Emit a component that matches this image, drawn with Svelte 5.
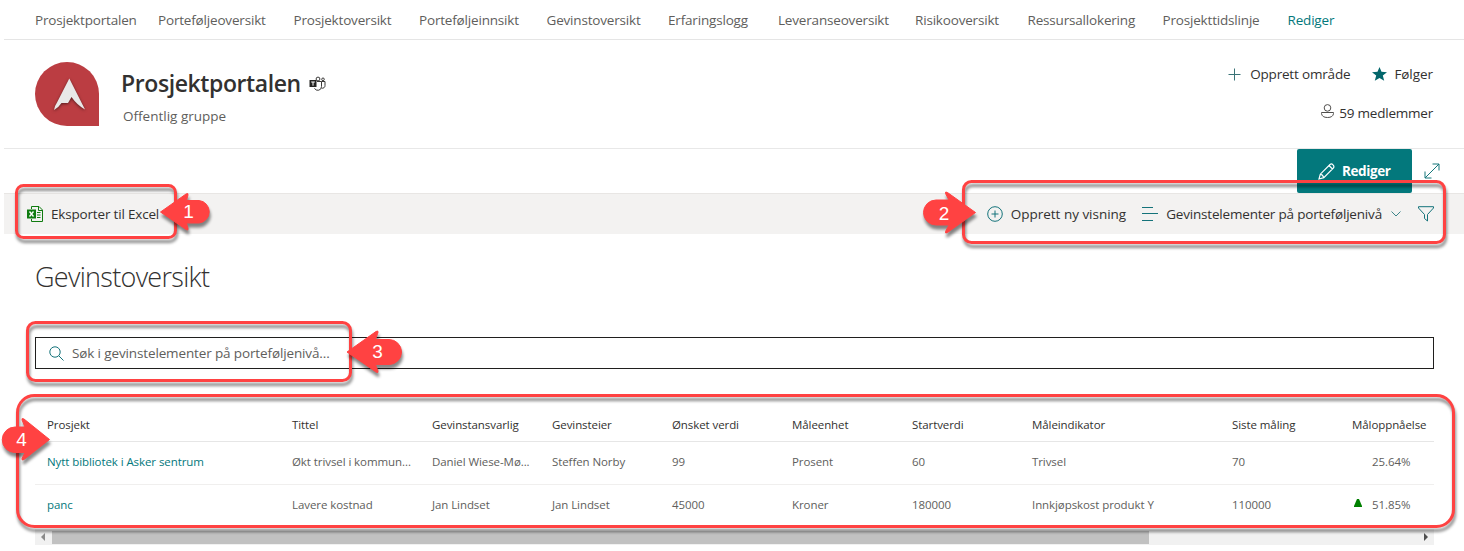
<script>
  const nav = [
    ['Prosjektportalen', 123], ['Porteføljeoversikt', 135.5], ['Prosjektoversikt', 125.5],
    ['Porteføljeinnsikt', 127.5], ['Gevinstoversikt', 121.5], ['Erfaringslogg', 110],
    ['Leveranseoversikt', 137], ['Risikooversikt', 112.5], ['Ressursallokering', 135],
    ['Prosjekttidslinje', 125], ['Rediger', 60]
  ];
  const columns = ['Prosjekt', 'Tittel', 'Gevinstansvarlig', 'Gevinsteier', 'Ønsket verdi', 'Måleenhet', 'Startverdi', 'Måleindikator', 'Siste måling', 'Måloppnåelse'];
  const rows = [
    ['Nytt bibliotek i Asker sentrum', 'Økt trivsel i kommun...', 'Daniel Wiese-Mø...', 'Steffen Norby', '99', 'Prosent', '60', 'Trivsel', '70', '25.64%'],
    ['panc', 'Lavere kostnad', 'Jan Lindset', 'Jan Lindset', '45000', 'Kroner', '180000', 'Innkjøpskost produkt Y', '110000', '51.85%']
  ];
  const boxes = [
    { x: 16.5, y: 185.5, w: 159, h: 52, r: 7 },
    { x: 963.5, y: 181.5, w: 481, h: 61, r: 8 },
    { x: 27.5, y: 322.5, w: 323, h: 58, r: 8 },
    { x: 17.5, y: 395.5, w: 1436, h: 131, r: 17 }
  ];
  const arrows = [
    { d: 'M160.500 212L186 194Q188.500 192.500 188 195L186.500 200.500H199A11.300 11.300 0 0 1 199 223H186.500L188 228.500Q188.500 231 186 229.500Z', n: 1, x: 188.5, y: 218 },
    { d: 'M975.500 212.500L947.500 192.500Q945 191 945.500 193.500L949 200H936A12.500 12.500 0 0 0 936 225H949L945.500 231.500Q945 234 947.500 232.500Z', n: 2, x: 944, y: 219.5 },
    { d: 'M347 352L376 331.500Q378.500 330 378 332.500L375.500 339.500H389A12.500 12.500 0 0 1 389 364.500H375.500L378 371Q378.500 373.500 376 372Z', n: 3, x: 377.500, y: 358 },
    { d: 'M49.500 439.500L24 419Q21.500 417.500 22 420L25 427H15A12.700 12.700 0 0 0 15 452.500H25L22 458.500Q21.500 461 24 459.500Z', n: 4, x: 21.500, y: 446 }
  ];
</script>

<div class="page">
  <nav>
    {#each nav as [label, width], i}
      <a class:edit={i === 10} style="width:{width}px">{label}</a>
    {/each}
  </nav>

  <header>
    <svg class="logo" width="64" height="64" viewBox="0 0 64 64">
      <path d="M32 0A32 32 0 0 1 64 32V64H32A32 32 0 0 1 32 0Z" fill="#bb3d42" />
      <path class="mark" d="M34.300 16.500L50 47.500Q42 43 36.500 35L33 41H26.500Q24 45 19 48Q19.500 44 22 40.500Z" fill="#e8e8e8" />
    </svg>
    <div class="site">
      <div class="name">
        <h1>Prosjektportalen</h1>
        <svg width="17" height="16" viewBox="0 0 17 16" fill="none" stroke="#3b3a39">
          <circle cx="9" cy="3" r="1.900" /><circle cx="14" cy="3.300" r="1.300" />
          <path d="M8 5.500H12.500V10.500A3.700 3.700 0 0 1 5.500 12.300M12.500 5.500H16V9.500A2.500 2.500 0 0 1 12.500 12" />
          <path d="M.5 4H7.500V11H.5Z" fill="#252423" stroke="none" />
          <path d="M2.200 6H5.800M4 6V9.700" stroke="#fff" />
        </svg>
      </div>
      <p>Offentlig gruppe</p>
    </div>
    <div class="actions">
      <div class="top">
        <svg class="plus" width="13" height="13" viewBox="0 0 13 13"><path d="M6.500 .5V12.500M.5 6.500H12.500" stroke="#3a7377" /></svg>
        <span class="create">Opprett område</span>
        <svg class="star" width="15" height="14" viewBox="0 0 15 14"><path d="M7.500 0L9.500 4.800L15 5.200L10.800 8.500L12.200 13.700L7.500 10.900L2.800 13.700L4.200 8.500L0 5.200L5.500 4.800Z" fill="#03666b" /></svg>
        <span class="follow">Følger</span>
      </div>
      <div class="members">
        <svg width="13" height="15" viewBox="0 0 13 15" fill="none" stroke="#504e4c"><circle cx="6.500" cy="3.900" r="3.300" /><path d="M.5 8.500H12.500V9.500Q12 13.500 6.500 13.500T.5 9.500Z" /></svg>
        <span>59 medlemmer</span>
      </div>
    </div>
  </header>

  <div class="editbar">
    <button>
      <svg width="17" height="17" viewBox="0 0 17 17" fill="none" stroke="#fff" stroke-width="1.200"><path d="M1 16L2.300 11.200L12 1.500Q13.500 .3 15 1.800T15.500 5L5.800 14.700Z M11 2.500L14.500 6M2.300 11.200Q4.900 11.900 5.800 14.700" /></svg>
      <span>Rediger</span>
    </button>
    <svg class="expand" width="16" height="16" viewBox="0 0 16 16" fill="none" stroke="#17777b"><path d="M1 15L15 1M8.500 1H15V7.500M1 8.500V15H7.500" /></svg>
  </div>

  <div class="toolbar">
    <svg class="excel" width="16" height="16" viewBox="0 0 16 16" fill="none" stroke="#107c10"><path d="M4.500 3V.5H12L15.500 4V15.500H4.500V13M11.500 .5V4.500H15.500M10 6.500H13.500M10 9H13.500M10 11.500H13.500" /><path d="M0 3.500H9V12.500H0Z" fill="#107c10" stroke="none" /><path d="M2.500 5.500L6.500 10.500M6.500 5.500L2.500 10.500" stroke="#fff" stroke-width="1.300" /></svg>
    <span class="export">Eksporter til Excel</span>
    <svg class="add" width="16" height="16" viewBox="0 0 16 16" fill="none" stroke="#14737a"><circle cx="8" cy="8" r="7.300" /><path d="M8 4.500V11.500M4.500 8H11.500" /></svg>
    <span class="new">Opprett ny visning</span>
    <svg class="lines" width="16" height="14" viewBox="0 0 16 14"><path d="M0 .5H11M0 6.500H16M0 13.500H11" stroke="#14737a" /></svg>
    <span class="view">Gevinstelementer på porteføljenivå</span>
    <svg class="chevron" width="10" height="6" viewBox="0 0 10 6" fill="none" stroke="#3c858a"><path d="M.5 .5L5 5L9.500 .5" /></svg>
    <svg class="filter" width="16" height="16" viewBox="0 0 16 16" fill="none" stroke="#14737a"><path d="M.5 .7H15.500V2L9.500 8.500V15L6.500 12.500V8.500L.5 2Z" /></svg>
  </div>

  <main>
    <h2>Gevinstoversikt</h2>
    <div class="search">
      <svg width="15" height="15" viewBox="0 0 15 15" fill="none" stroke="#14737a"><circle cx="6" cy="6" r="5.200" /><path d="M9.800 9.800L14.500 14.500" /></svg>
      <span>Søk i gevinstelementer på porteføljenivå...</span>
    </div>
    <div class="table">
      <div class="row head">
        {#each columns as c}<span>{c}</span>{/each}
      </div>
      {#each rows as row, r}
        <div class="row">
          {#each row as cell, i}
            <span class:link={i === 0} class:percent={i === 9}>
              {#if i === 9}
                <i>{#if r === 1}<svg width="8" height="8" viewBox="0 0 8 8"><path d="M3 0H5L8 7V8H0V7Z" fill="#008000" /></svg>{/if}</i>
              {/if}{cell}</span>
          {/each}
        </div>
      {/each}
    </div>
    <div class="scroll">
      <svg width="17" height="16" viewBox="0 0 17 16"><path d="M10 4V12L6 8Z" fill="#8b8b8b" /></svg>
      <div class="thumb"></div>
      <svg width="17" height="16" viewBox="0 0 17 16"><path d="M7 4V12L11 8Z" fill="#505050" /></svg>
    </div>
  </main>

  <svg class="notes" width="1464" height="551" viewBox="0 0 1464 551">
    {#each boxes as b}
      <rect class="note" x={b.x} y={b.y} width={b.w} height={b.h} rx={b.r} fill="none" stroke="#ff4242" stroke-width="3" />
    {/each}
    {#each arrows as a}
      <path class="note" d={a.d} fill="#ff4242" stroke="#ff4242" stroke-linejoin="round" />
      <text x={a.x} y={a.y} text-anchor="middle">{a.n}</text>
    {/each}
  </svg>
</div>

<style>
  :global(body) { margin: 0; background: #fff; overflow: hidden; }
  .page { position: relative; box-sizing: border-box; width: 1464px; height: 551px; padding-left: 4px; font: 13.5px/20px 'Open Sans', 'Noto Sans', sans-serif; letter-spacing: -.18px; color: #323130; overflow: hidden; white-space: nowrap; }
  svg { display: block; flex: none; }
  nav { display: flex; align-items: center; height: 39px; padding-left: 31px; border-bottom: 1px solid #e5e5e5; color: #605e5c; }
  nav a { flex: none; }
  .edit { color: #03787c; }
  header { display: flex; box-sizing: border-box; height: 109px; padding: 22px 31px 0; border-bottom: 1px solid #e8e8e8; }
  .mark { filter: drop-shadow(0 1px 1.500px #0008); }
  .site { margin-left: 22px; }
  .name { display: flex; align-items: center; gap: 8px; height: 44px; }
  h1 { margin: 0; padding-bottom: 2px; font-size: 23px; line-height: 32px; font-weight: 600; letter-spacing: -.4px; color: #323130; }
  p { margin: 0 0 0 2px; color: #605e5c; letter-spacing: 0; }
  .actions { margin-left: auto; display: flex; flex-direction: column; align-items: flex-end; padding-top: 2px; gap: 19px; }
  .top, .members { display: flex; align-items: center; }
  .plus { margin-right: 9px; }
  .create { margin-right: 22px; }
  .star { margin-right: 7px; }
  .follow { letter-spacing: -.05px; }
  .members svg { margin-bottom: 3px; }
  .members span { margin-left: 5px; letter-spacing: -.22px; }
  .editbar { display: flex; justify-content: flex-end; height: 44px; padding-right: 24px; align-items: flex-start; }
  button { display: flex; align-items: center; gap: 7px; width: 115px; height: 44px; border: 0; border-radius: 2px; padding: 0 0 0 21px; background: #03787c; color: #fff; font: 700 13.500px/20px 'Open Sans', sans-serif; letter-spacing: -.4px; }
  .expand { margin: 14px 0 0 12px; }
  .toolbar { display: flex; align-items: center; box-sizing: border-box; height: 41px; padding: 0 30px 0 23px; border-top: 1px solid #e8e6e4; background: #f3f2f1; }
  .export { margin-left: 8px; margin-right: auto; }
  .new { margin: 0 16px 0 8px; letter-spacing: -.02px; }
  .view { margin: 0 9px 0 8px; }
  .filter { margin-left: 17px; }
  main { padding: 25px 30px 0 31px; }
  h2 { margin: 0 0 42px; font-size: 27px; line-height: 36px; font-weight: 300; letter-spacing: -.7px; }
  .search { display: flex; align-items: center; box-sizing: border-box; height: 32px; padding-left: 13px; border: 1px solid #201f1e; color: #605e5c; }
  .search span { margin-left: 8px; letter-spacing: -.13px; }
  .table { padding-top: 40px; font-size: 11.500px; letter-spacing: -.08px; }
  .row { display: grid; grid-template-columns: 245px 140px 120px 120px 120px 120px 120px 200px 120px 82px; box-sizing: border-box; height: 43px; padding: 11px 0 0 12px; border-bottom: 1px solid #f0efee; color: #605e5c; line-height: 18px; }
  .row:last-child { border-bottom-color: transparent; height: 44px; }
  .head { height: 33px; padding-top: 7px; color: #323130; border-bottom-color: #e6e6e6; }
  .link { color: #03787c; }
  .percent { display: flex; }
  .percent i { display: flex; box-sizing: border-box; width: 20px; padding: 3px 0 0 2px; }
  .scroll { display: flex; align-items: center; height: 16px; background: #f1f1f1; }
  .scroll svg:last-child { margin-left: auto; }
  .thumb { width: 1097px; height: 13px; background: #c1c1c1; }
  .notes { position: absolute; left: 0; top: 0; }
  .note { filter: drop-shadow(1px 4px 1.700px #0007); }
  text { font: 19px 'Liberation Sans', sans-serif; letter-spacing: 0; fill: #fff; }
</style>
